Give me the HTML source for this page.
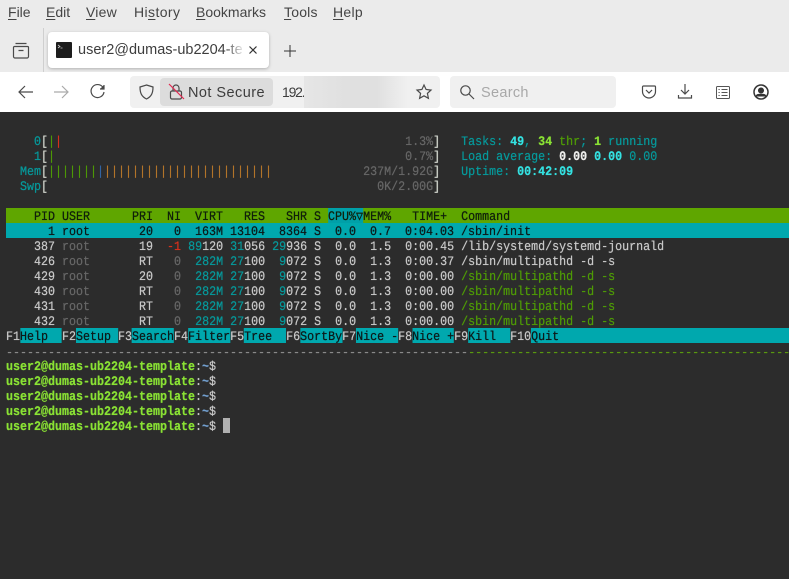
<!DOCTYPE html>
<html><head><meta charset="utf-8"><style>
html,body{margin:0;padding:0;width:789px;height:579px;overflow:hidden;background:#2c2c2c}
.m{position:absolute;top:3px;font:14px/18px "Liberation Sans",sans-serif;color:#444;white-space:pre}
.m u{text-underline-offset:2px}
.abs{position:absolute}
svg{position:absolute;overflow:visible;fill:none;stroke:#4a4a4a;stroke-width:1.2}
.l{position:absolute;left:6px;height:15px;width:873px;font:13px/18px "Liberation Mono",monospace;text-rendering:geometricPrecision;white-space:pre;color:#c8c8c8;overflow:hidden;transform:scaleX(.8974);transform-origin:0 0;text-shadow:0 0 .6px currentColor}
.c{color:#06989a}.d{color:#666}.w{color:#d3d7cf}.g{color:#4e9a06}.r{color:#d8301c}.o{color:#b5752a}.b{color:#3465a4}
.bc{color:#34e2e2;font-weight:bold}.bg{color:#8ae234;font-weight:bold}.bw{color:#eeeeec;font-weight:bold}
.k{display:inline-block;height:15px;background:#00a8ae;color:#0c1a1a;vertical-align:top}
</style></head><body>
<div class="abs" style="left:0;top:0;width:789px;height:72px;background:#ebebeb"></div>
<div class="m" style="left:8px"><u>F</u>ile</div>
<div class="m" style="left:46px"><u>E</u>dit</div>
<div class="m" style="left:86px;letter-spacing:.2px"><u>V</u>iew</div>
<div class="m" style="left:134px;letter-spacing:.4px">Hi<u>s</u>tory</div>
<div class="m" style="left:196px"><u>B</u>ookmarks</div>
<div class="m" style="left:284px;letter-spacing:.2px"><u>T</u>ools</div>
<div class="m" style="left:333px;letter-spacing:.3px"><u>H</u>elp</div>
<div class="abs" style="left:43px;top:28px;width:1px;height:44px;background:#cfcfcf"></div>
<svg style="left:13px;top:42px" width="16" height="17" viewBox="0 0 16 17"><path d="M2.500 1.500h11M1.500 4.500h13a1 1 0 0 1 1 1v9a1.500 1.500 0 0 1-1.500 1.500H2a1.500 1.500 0 0 1-1.500-1.500v-9a1 1 0 0 1 1-1zM5.500 8.500h5"/></svg>
<div class="abs" style="left:48px;top:32px;width:221px;height:36px;background:#fff;border-radius:4px;box-shadow:0 1px 3px rgba(0,0,0,.25)"></div>
<div class="abs" style="left:56px;top:42px;width:16px;height:16px;background:#1d1d1d;border-radius:1px"></div>
<svg style="left:58px;top:45px;stroke:#ccc;stroke-width:.8" width="6" height="5"><path d="M0 0l2 1.500-2 1.500M2.500 3h2"/></svg>
<div class="abs" style="left:78px;top:41px;width:167px;height:18px;overflow:hidden;font:14.5px/18px 'Liberation Sans',sans-serif;color:#3d3d3d;white-space:pre">user2@dumas-ub2204-te</div>
<div class="abs" style="left:225px;top:40px;width:20px;height:20px;background:linear-gradient(90deg,rgba(255,255,255,0),#fff)"></div>
<svg style="left:249px;top:46px;stroke:#333" width="8" height="8"><path d="M.5.5l7 7M7.500.5l-7 7"/></svg>
<svg style="left:284px;top:45px;stroke:#333;stroke-width:1" width="12" height="12"><path d="M6 0v12M0 6h12"/></svg>
<div class="abs" style="left:0;top:72px;width:789px;height:40px;background:#fff"></div>
<svg style="left:18px;top:85px" width="15" height="14"><path d="M15 7H1M7 1L1 7l6 6"/></svg>
<svg style="left:54px;top:85px;stroke:#aaa" width="15" height="14"><path d="M0 7h14M8 1l6 6-6 6"/></svg>
<svg style="left:90px;top:84px" width="15" height="15"><path d="M13 3.500A6.500 6.500 0 1 0 14 8"/><path d="M14 1v4h-4" fill="#444"/></svg>
<div class="abs" style="left:130px;top:76px;width:310px;height:32px;background:#f0f0f0;border-radius:4px"></div>
<svg style="left:139px;top:84px" width="15" height="16"><path d="M7.500 1L14 3c0 6-1.500 9.500-6.500 12C2.500 12.500 1 9 1 3z"/></svg>
<div class="abs" style="left:160px;top:78px;width:113px;height:28px;background:#dcdcdc;border-radius:4px"></div>
<svg style="left:169px;top:84px" width="15" height="16"><rect x="1.500" y="7" width="11" height="8" rx="1.500"/><path d="M4 7V4a3 3 0 0 1 6 0v3"/><path d="M0 0l15 15" style="stroke:#e22850"/></svg>
<div class="abs" style="left:188px;top:84px;font:14.5px/18px 'Liberation Sans',sans-serif;color:#3d3d3d;white-space:pre;letter-spacing:.45px">Not Secure</div>
<div class="abs" style="left:282px;top:83px;font:14px/18px 'Liberation Sans',sans-serif;color:#3d3d3d;white-space:pre;letter-spacing:-1.2px">192.</div>
<div class="abs" style="left:304px;top:76px;width:104px;height:32px;background:linear-gradient(90deg,#e6e6e6,#e0e0e0 40%,#e0e0e0 70%,#f0f0f0)"></div>
<svg style="left:416px;top:84px" width="16" height="16"><path d="M8 1l2.100 4.500 4.900.6-3.600 3.300 1 4.900L8 11.800l-4.400 2.500 1-4.900L1 6.100l4.900-.6z"/></svg>
<div class="abs" style="left:450px;top:76px;width:166px;height:32px;background:#f0f0f0;border-radius:4px"></div>
<svg style="left:460px;top:85px" width="14" height="14"><circle cx="5.500" cy="5.500" r="4.700"/><path d="M9 9l5 5"/></svg>
<div class="abs" style="left:481px;top:84px;font:14.5px/18px 'Liberation Sans',sans-serif;color:#a8a8a8;white-space:pre;letter-spacing:.3px">Search</div>
<svg style="left:642px;top:85px" width="14" height="14"><path d="M1.500 1h11A1 1 0 0 1 13.500 2v4.500a6.500 6.500 0 0 1-13 0V2a1 1 0 0 1 1-1z"/><path d="M4 5l3 3 3-3"/></svg>
<svg style="left:678px;top:84px" width="14" height="15"><path d="M7 0v10M3 6l4 4 4-4M.5 11v3h13v-3"/></svg>
<svg style="left:716px;top:86px;stroke:#555;stroke-width:1" width="14" height="13"><rect x=".5" y=".5" width="13" height="12" rx="1"/><path d="M5.500 3.500h6M5.500 6.500h6M5.500 9.500h6M2.500 3.500h1.200M2.500 6.500h1.200M2.500 9.500h1.200"/></svg>
<svg style="left:753px;top:84px;stroke:#333;stroke-width:1.500" width="16" height="16"><circle cx="8" cy="8" r="7"/><circle cx="8" cy="6.500" r="2.300" fill="#333"/><path d="M3.500 12.500c0-1.700 1.500-2 4.500-2s4.500.3 4.500 2" fill="#333"/></svg>

<div class="l" style="top:133px">    <span class="c">0</span><span class="w">[</span><span class="g">|</span><span class="r">|</span><span class="d">                                                 1.3%</span><span class="w">]</span>   <span class="c">Tasks: </span><span class="bc">49</span><span class="c">, </span><span class="bg">34</span><span class="g"> thr</span><span class="c">; </span><span class="bg">1</span><span class="c"> running</span></div>
<div class="l" style="top:148px">    <span class="c">1</span><span class="w">[</span><span class="g">|</span><span class="d">                                                  0.7%</span><span class="w">]</span>   <span class="c">Load average: </span><span class="bw">0.00</span> <span class="bc">0.00</span> <span class="c">0.00</span></div>
<div class="l" style="top:163px">  <span class="c">Mem</span><span class="w">[</span><span class="g">|||||||</span><span class="b">|</span><span class="o">||||||||||||||||||||||||</span><span class="d">             237M/1.92G</span><span class="w">]</span>   <span class="c">Uptime: </span><span class="bc">00:42:09</span></div>
<div class="l" style="top:178px">  <span class="c">Swp</span><span class="w">[</span><span class="d">                                               0K/2.00G</span><span class="w">]</span></div>

<div class="l" style="top:208px;background:#5fa600;color:#10200a">    PID USER      PRI  NI  VIRT   RES   SHR S <span class="k" style="background:#00a0a8;color:#10200a">CPU%▽</span>MEM%   TIME+  Command</div>
<div class="l" style="top:223px;background:#00a8ae;color:#0c1a1a">      1 root       20   0  163M 13104  8364 S  0.0  0.7  0:04.03 /sbin/init</div>
<div class="l" style="top:238px">    387 <span class="d">root</span>       19  <span class="r">-1</span> <span class="c">89</span>120 <span class="c">31</span>056 <span class="c">29</span>936 S  0.0  1.5  0:00.45 /lib/systemd/systemd-journald</div>
<div class="l" style="top:253px">    426 <span class="d">root</span>       RT   <span class="d">0</span>  <span class="c">282M</span> <span class="c">27</span>100  <span class="c">9</span>072 S  0.0  1.3  0:00.37 /sbin/multipathd -d -s</div>
<div class="l" style="top:268px">    429 <span class="d">root</span>       20   <span class="d">0</span>  <span class="c">282M</span> <span class="c">27</span>100  <span class="c">9</span>072 S  0.0  1.3  0:00.00 <span class="g">/sbin/multipathd -d -s</span></div>
<div class="l" style="top:283px">    430 <span class="d">root</span>       RT   <span class="d">0</span>  <span class="c">282M</span> <span class="c">27</span>100  <span class="c">9</span>072 S  0.0  1.3  0:00.00 <span class="g">/sbin/multipathd -d -s</span></div>
<div class="l" style="top:298px">    431 <span class="d">root</span>       RT   <span class="d">0</span>  <span class="c">282M</span> <span class="c">27</span>100  <span class="c">9</span>072 S  0.0  1.3  0:00.00 <span class="g">/sbin/multipathd -d -s</span></div>
<div class="l" style="top:313px">    432 <span class="d">root</span>       RT   <span class="d">0</span>  <span class="c">282M</span> <span class="c">27</span>100  <span class="c">9</span>072 S  0.0  1.3  0:00.00 <span class="g">/sbin/multipathd -d -s</span></div>
<div class="l" style="top:328px">F1<span class="k">Help  </span>F2<span class="k">Setup </span>F3<span class="k">Search</span>F4<span class="k">Filter</span>F5<span class="k">Tree  </span>F6<span class="k">SortBy</span>F7<span class="k">Nice -</span>F8<span class="k">Nice +</span>F9<span class="k">Kill  </span>F10<span class="k">Quit                                     </span></div>
<div class="l" style="top:344px;color:#8a8a8a">------------------------------------------------------------------<span class="g" style="color:#5a9a10">----------------------------------------------</span></div>
<div class="l" style="top:358px"><span class="bg">user2@dumas-ub2204-template</span>:<span style="color:#729fcf;font-weight:bold">~</span>$</div>
<div class="l" style="top:373px"><span class="bg">user2@dumas-ub2204-template</span>:<span style="color:#729fcf;font-weight:bold">~</span>$</div>
<div class="l" style="top:388px"><span class="bg">user2@dumas-ub2204-template</span>:<span style="color:#729fcf;font-weight:bold">~</span>$</div>
<div class="l" style="top:403px"><span class="bg">user2@dumas-ub2204-template</span>:<span style="color:#729fcf;font-weight:bold">~</span>$</div>
<div class="l" style="top:418px"><span class="bg">user2@dumas-ub2204-template</span>:<span style="color:#729fcf;font-weight:bold">~</span>$</div>
<div class="abs" style="left:223px;top:418px;width:7px;height:15px;background:#b0b0b0"></div>
</body></html>
